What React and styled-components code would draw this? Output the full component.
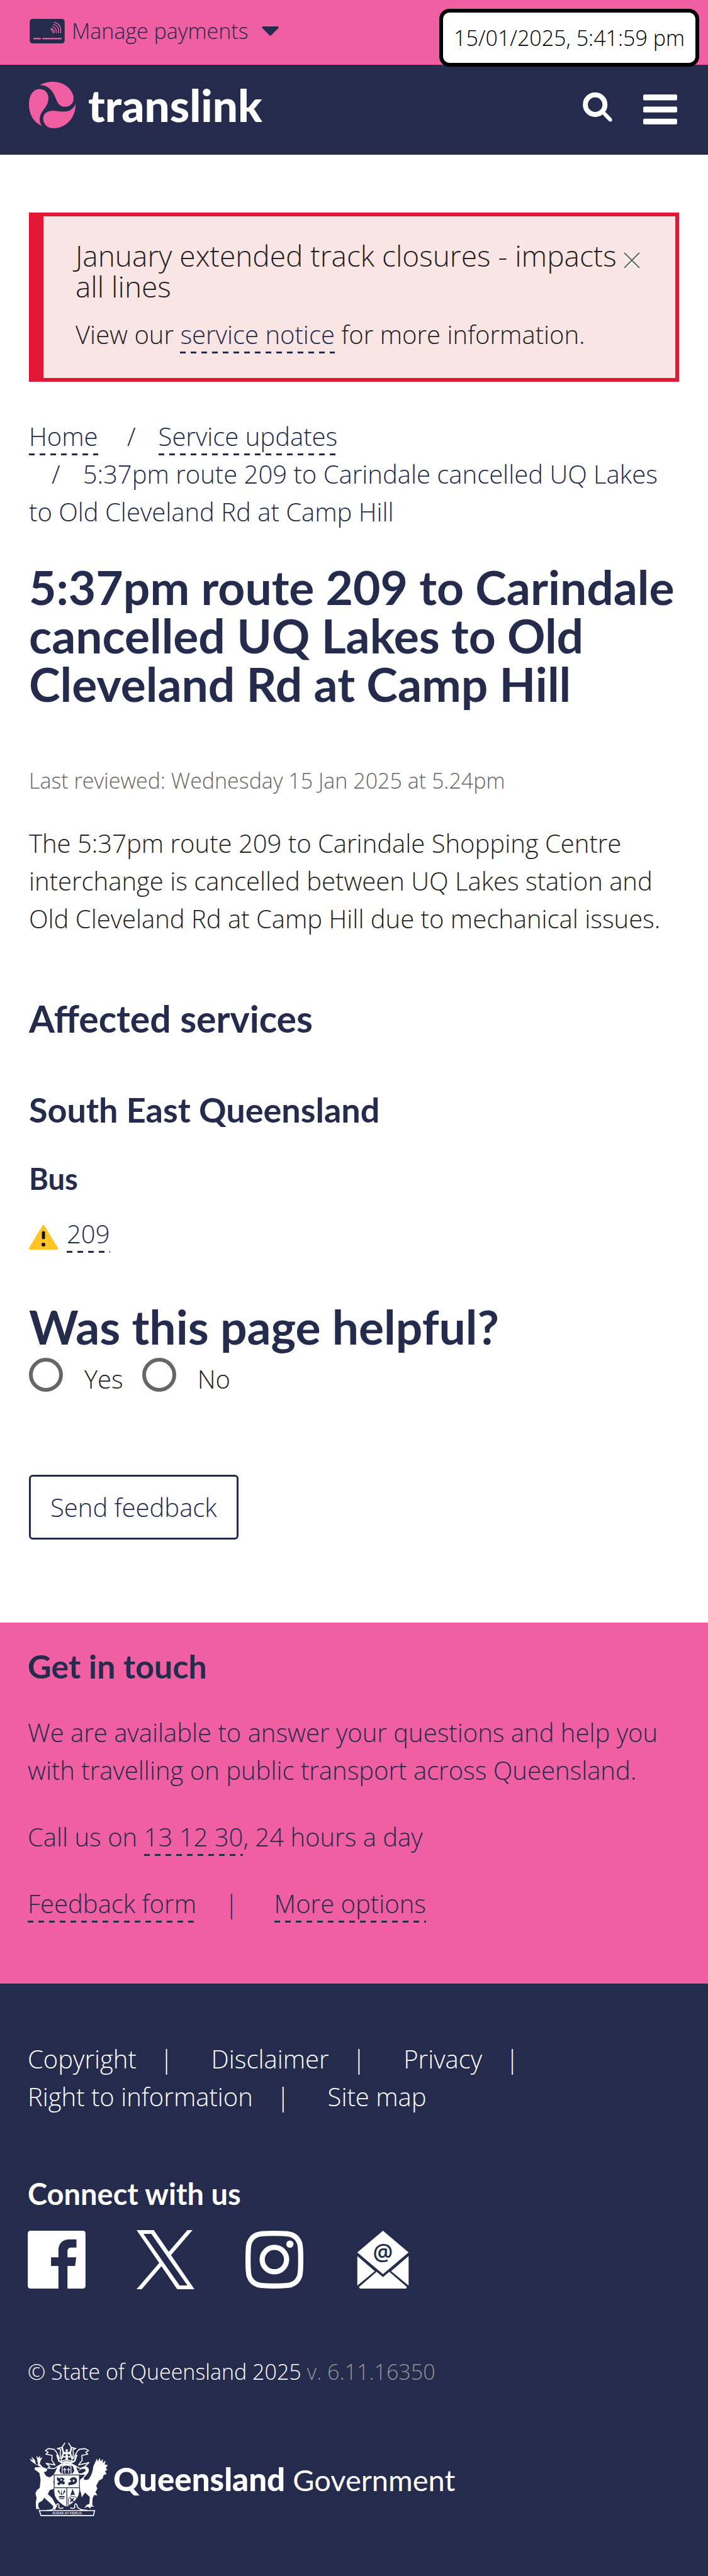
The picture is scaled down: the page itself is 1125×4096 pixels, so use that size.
import React from "react";
import styled, { createGlobalStyle } from "styled-components";

const navy = "#252b4d";
const pink = "#f05fa1";
const body = '"Open Sans", "Noto Sans", sans-serif';
const heading = 'Lato, "Open Sans", sans-serif';

const GlobalStyle = createGlobalStyle`
  *, *::before, *::after { box-sizing: border-box; }
  body {
    margin: 0;
    background: #fff;
    color: #222;
    font: 300 40px/60px ${body};
  }
  h1, h2, h3, h4, p, ul, ol, fieldset { margin: 0; padding: 0; border: 0; }
  ul, ol { list-style: none; }
  button { font: inherit; color: inherit; background: none; border: 0; padding: 0; cursor: pointer; }
  svg { display: block; flex: none; }
`;

const Page = styled.div`
  position: relative;
`;

const TopBar = styled.div`
  height: 103px;
  padding: 25px 47px 0;
  background: ${pink};
  color: ${navy};
`;

const PaymentsButton = styled.button`
  display: flex;
  align-items: center;
  gap: 11px;
  font-size: 34px;
  line-height: 48px;
`;

const PaymentsLabel = styled.span`
  padding-right: 11px;
`;

const Timestamp = styled.div`
  position: absolute;
  top: 14px;
  right: 14px;
  padding: 14px 17px;
  border: 6px solid #000;
  border-radius: 16px;
  background: #fff;
  color: #000;
  font-size: 34px;
  line-height: 52px;
`;

const Header = styled.header`
  display: flex;
  justify-content: space-between;
  align-items: center;
  padding: 27px 49px 42px 46px;
  background: ${navy};
  color: #fff;
`;

const Brand = styled.a`
  display: flex;
  align-items: center;
  gap: 20px;
  color: inherit;
  text-decoration: none;
  font: 900 71px/74px ${heading};
`;

const Actions = styled.div`
  display: flex;
  align-items: center;
  gap: 42px;
  padding-top: 14px;
`;

const Main = styled.main`
  padding: 92px 46px 132px;
`;

const Alert = styled.section`
  padding: 38px 56px 39px 51px;
  border: 6px solid #e31837;
  border-left-width: 23px;
  background: #f9e5e4;
`;

const AlertHead = styled.div`
  display: flex;
  align-items: flex-start;
  gap: 6px;
  margin-bottom: 22px;
`;

const AlertTitle = styled.p`
  flex: 1;
  font-size: 46px;
  line-height: 49px;
`;

const CloseButton = styled.button`
  margin-top: 19px;
`;

const Link = styled.a`
  padding-bottom: 3px;
  color: ${navy};
  text-decoration: none;
  background: linear-gradient(to right, ${navy} 9px, transparent 9px) 0 100% / 17px 3px repeat-x;
`;

const Breadcrumbs = styled.ol`
  margin-top: 57px;
  color: ${navy};
`;

const Crumb = styled.li`
  display: inline-block;
  vertical-align: top;

  & + &::before {
    content: "/";
    padding: 0 36px;
  }
`;

const Title = styled.h1`
  margin-top: ${(p) => p.$space};
  color: ${navy};
  font: 700 75px/77px ${heading};
`;

const Reviewed = styled.p`
  margin-top: 90px;
  color: #666;
  font-size: 34px;
  line-height: 50px;
`;

const Summary = styled.p`
  margin-top: 45px;
`;

const Subheading = styled.h2`
  margin-top: ${(p) => p.$space};
  color: ${(p) => p.$color || navy};
  font: 700 ${(p) => p.$size}/60px ${heading};
`;

const ServiceRow = styled.div`
  display: flex;
  align-items: center;
  gap: 14px;
  margin-top: 28px;

  svg { margin-top: 10px; }
`;

const Choices = styled.fieldset`
  display: flex;
  gap: 30px;
  margin-top: 11px;
`;

const Choice = styled.label`
  display: flex;
  align-items: flex-start;
  gap: 34px;
`;

const ChoiceText = styled.span`
  padding-top: 4px;
`;

const Radio = styled.input`
  appearance: none;
  width: 54px;
  height: 54px;
  margin: 0;
  border: 6px solid #666;
  border-radius: 50%;

  &:checked { background: ${navy}; background-clip: content-box; padding: 8px; }
`;

const SendButton = styled.button`
  && {
    display: block;
    height: 103px;
    margin-top: 122px;
    padding: 0 31px;
    border: 3px solid ${navy};
    border-radius: 6px;
    color: ${navy};
  }
`;

const Contact = styled.section`
  padding: 39px 44px 97px;
  background: ${pink};
  color: ${navy};
`;

const ContactText = styled.p`
  margin-top: 46px;
`;

const ContactLinks = styled.div`
  display: flex;
  margin-top: 46px;
`;

const Divider = styled.span`
  padding: 0 57px 0 45px;
`;

const Footer = styled.footer`
  padding: 90px 44px 95px;
  background: ${navy};
  color: #fff;
`;

const FooterLinks = styled.ul`
  display: flex;
  flex-wrap: wrap;
`;

const FooterItem = styled.li`
  a { color: inherit; text-decoration: none; }

  &:not(:last-child)::after {
    content: "|";
    padding: 0 60px 0 37px;
  }
`;

const Social = styled.div`
  display: flex;
  align-items: center;
  gap: 81px;
  margin-top: 28px;
`;

const Copyright = styled.p`
  margin-top: 106px;
  font-size: 34px;
  line-height: 50px;
`;

const Version = styled.span`
  color: #949494;
`;

const Government = styled.a`
  display: flex;
  align-items: center;
  gap: 9px;
  margin-top: 87px;
  padding-left: 3px;
  color: inherit;
  text-decoration: none;
  font: 400 47px/117px ${heading};
`;

const GovernmentName = styled.span`
  strong { font-size: 51px; font-weight: 900; }
`;

const CardIcon = () => (
  <svg width="56" height="39" viewBox="28 27 175 123" aria-hidden="true">
    <rect x="28" y="27" width="175" height="123" rx="14" fill={navy} />
    <g stroke={pink} fill="none" strokeLinecap="round">
      <path d="M49 126H81M93 126H185" strokeWidth="7" />
      <path d="M151 45C174 48 187 68 183 97M146 55C164 58 175 73 172 97M141 66C154 67 163 78 161 97M135 76C145 77 152 85 150 97M134 80C140 82 144 88 144 96" strokeWidth="4.5" />
    </g>
  </svg>
);

const CaretIcon = () => (
  <svg width="27" height="15" viewBox="0 0 27 15" aria-hidden="true">
    <path d="M2 0H25Q28 1 26 3L15 14Q13.500 15.500 12 14L1 3Q-1 1 2 0Z" fill={navy} />
  </svg>
);

const Emblem = () => (
  <svg width="74" height="74" viewBox="24 350 232 232" fill={pink} aria-hidden="true">
    <path d="M78 367C98 354 122 350 145 350C192 351 232 378 244 416C254 452 232 475 202 475C179 472 168 461 158 433C144 400 126 366 78 367Z" />
    <path d="M76 386C46 388 26 413 24 458C23 510 46 552 88 570C72 545 74 518 96 490C112 470 122 453 121 427C118 401 100 386 76 386Z" />
    <path d="M256 461C258 530 208 581 146 582C113 582 94 559 95 530C98 505 118 494 147 494C198 501 236 506 256 461Z" />
  </svg>
);

const SearchIcon = () => (
  <svg width="54" height="54" viewBox="120 42 170 170" stroke="#fff" fill="none" aria-hidden="true">
    <circle cx="182" cy="103" r="49" strokeWidth="25" />
    <path d="M228 148L259 180" strokeWidth="19" strokeLinejoin="round" />
    <path d="M226 146L259 180" strokeWidth="16" strokeLinecap="round" />
  </svg>
);

const MenuIcon = () => (
  <svg width="54" height="48" viewBox="420 54 171 150" fill="#fff" aria-hidden="true">
    <rect x="420" y="54" width="171" height="29" rx="6" />
    <rect x="420" y="115" width="171" height="29" rx="6" />
    <rect x="420" y="176" width="171" height="28" rx="6" />
  </svg>
);

const CloseIcon = () => (
  <svg width="26" height="30" viewBox="0 0 26 30" fill="none" strokeWidth="2" aria-hidden="true">
    <path d="M1 4L25 28M25 4L1 28" stroke="#fff" />
    <path d="M1 1L25 25M25 1L1 25" stroke="#666" />
  </svg>
);

const WarningIcon = () => (
  <svg width="46" height="39" viewBox="0 0 46 39" aria-hidden="true">
    <path d="M23 2L44 37H2Z" fill="#ffc425" stroke="#ffc425" strokeWidth="4" strokeLinejoin="round" />
    <path d="M23 12V20" stroke="#111" strokeWidth="5" strokeLinecap="round" />
    <circle cx="23" cy="31" r="3" fill="#111" />
  </svg>
);

const FacebookIcon = () => (
  <svg width="92" height="92" viewBox="15 54 288 289" fill="#fff" aria-hidden="true">
    <path fillRule="evenodd" d="M29 54H289Q303 54 303 68V329Q303 343 289 343H213V230H251L257 187H213V156Q213 138 234 138H258V97H222C190 97 168 117 168 150V187H131V230H168V343H29Q15 343 15 329V68Q15 54 29 54Z" />
  </svg>
);

const XIcon = () => (
  <svg width="92" height="94" viewBox="0 0 1200 1227" fill="#fff" aria-hidden="true">
    <path d="M714.163 519.284L1160.89 0H1055.03L667.137 450.887L357.328 0H0L468.492 681.821L0 1226.370H105.866L515.491 750.218L842.672 1226.370H1200L714.137 519.284H714.163ZM569.165 687.828L521.697 619.934L144.011 79.694H306.615L611.412 515.685L658.880 583.579L1055.080 1150.300H892.476L569.165 687.854V687.828Z" />
  </svg>
);

const InstagramIcon = () => (
  <svg width="92" height="92" viewBox="1108 54 289 289" fill="none" stroke="#fff" strokeWidth="26" aria-hidden="true">
    <path d="M1252.500 67C1206 67 1187 67 1170 73C1145 81 1134 96 1127 115C1121 133 1121 152 1121 198.500C1121 245 1121 264 1127 282C1134 301 1145 316 1170 324C1187 330 1206 330 1252.500 330C1299 330 1318 330 1335 324C1360 316 1371 301 1378 282C1384 264 1384 245 1384 198.500C1384 152 1384 133 1378 115C1371 96 1360 81 1335 73C1318 67 1299 67 1252.500 67Z" />
    <circle cx="1252.500" cy="198" r="61" />
    <circle cx="1330" cy="121" r="18" fill="#fff" stroke="none" />
  </svg>
);

const MailIcon = () => (
  <svg width="92" height="92" viewBox="-5 0 96 96" fill="#fff" aria-hidden="true">
    <path d="M42.500 0L85 36L42.500 72L0 36Z" />
    <path d="M0 42L29 67L0 91ZM85 42L56 67L85 91ZM32 68L42.500 77L53 68L82 93Q82 96 79 96H6Q3 96 3 93Z" />
    <text x="42.500" y="49" fill={navy} fontFamily="Open Sans, sans-serif" fontWeight="600" fontSize="37" textAnchor="middle">@</text>
  </svg>
);

const CoatOfArms = () => (
  <svg width="124" height="117" viewBox="27 33 390 367" fill="#fff" aria-hidden="true">
    {/* crest and mantling */}
    <g fill="none" stroke="#fff" strokeWidth="5" strokeLinecap="round" strokeLinejoin="round">
      <path d="M203 35L189 56L166 62L182 66L180 90L186 122M222 35L236 56L258 62L244 66L246 90L238 122" />
      <path d="M190 58L196 84L188 110M236 58L230 84L238 110" strokeWidth="8" />
      <path d="M178 112L160 78L150 66L120 62L106 72L120 80L108 90L140 96L138 120L154 144L110 136L128 152L118 160L150 162L186 140" />
      <path d="M246 112L264 78L274 66L304 62L322 72L308 80L318 90L288 96L290 120L272 144L324 132L304 150L312 160L276 160L240 140" />
      <path d="M164 96L174 124L186 130M262 96L252 124L240 130" strokeWidth="8" />
      <path d="M186 126Q212 112 238 126L234 142Q212 132 190 142Z" />
      <path d="M180 148C168 160 166 176 152 190H274C260 176 258 160 246 148Q212 134 180 148Z" strokeWidth="7" />
    </g>
    <path d="M190 130Q212 118 236 130L233 139Q212 129 193 139Z" />
    <path d="M206 66H219L216 80L230 77V92L216 88L220 102L230 98V108L218 106L219 118H206L207 106L195 108V98L205 102L209 88L195 92V77L209 80Z" />
    <path d="M190 152Q212 138 234 152V190H190Z" fill={navy} stroke="#fff" strokeWidth="4" />
    <path d="M203 158V184M195 167H211M222 158V184M214 167H230" stroke="#fff" strokeWidth="4" fill="none" />
    <path d="M168 150L182 150L176 174L186 190H150ZM258 150L244 150L250 174L240 190H274Z" />
    {/* red deer */}
    <path d="M84 154L58 142L34 124L28 110L44 122L36 102L54 120L58 138L70 146L64 112L60 98L70 108L80 98L78 112L92 106L82 122L78 138L92 154L116 164L112 176L98 180L110 200L128 206L148 192L158 200L146 228L154 262L128 270L118 290L140 310L160 346L156 368L142 362L146 350L114 320L100 308L92 322L72 334L70 352L78 364H60L58 334L62 308L56 286L64 270L78 258L82 218L76 184L52 166L54 156Z" />
    {/* brolga */}
    <path d="M264 190L292 184L308 174L302 162L288 164L268 176L288 156Q306 146 320 158Q328 170 318 186L302 204Q292 216 306 220L322 216Q342 190 346 150L364 112L368 128L378 108L382 126L394 114L392 134L408 122L402 142L418 144L408 160L416 168L404 176L412 188L396 196L392 212L374 222L360 248L366 262L356 280L366 296L350 294L342 310L340 344L350 354L334 352L330 362L318 352L300 360L312 344L326 338L328 304L304 282L288 306L284 284L270 252L274 230Q278 214 292 208L304 192L280 194Z" />
    {/* shield */}
    <path d="M150 194H276V254Q280 272 274 294Q260 332 212 356Q166 334 152 300Q146 272 150 254Z" stroke={navy} strokeWidth="4" />
    <path d="M152 258H274M213 258V354" stroke={navy} strokeWidth="4" />
    <g fill={navy}>
      <path d="M164 204L174 210L190 206L202 214L194 224L204 230L200 242L182 238L174 246L164 238L174 228L164 220ZM220 234L236 226L226 216L240 206Q260 202 264 218Q266 236 246 242L222 246ZM172 268L184 296L168 276ZM186 264L190 294H184ZM200 268L192 296L206 276ZM174 300H202V306H174ZM176 310H200V314H176ZM242 264L254 294Q240 290 230 298Z" />
    </g>
    <path d="M182 214Q188 212 190 220L182 224ZM246 216Q256 220 248 230Q238 224 246 216Z" />
    <path d="M220 312Q238 292 264 308Q254 330 222 346Z" stroke={navy} strokeWidth="3" />
    <path d="M230 310L248 328M248 310L230 328" stroke={navy} strokeWidth="6" fill="none" />
    {/* scroll */}
    <path d="M76 372H352L346 397H84ZM112 371Q160 370 162 344Q170 330 174 346Q168 368 196 358M316 371Q264 370 264 344Q256 330 252 346Q258 368 230 358" fill="none" stroke="#fff" strokeWidth="5" />
    <text x="214" y="391" fontFamily="Open Sans, sans-serif" fontWeight="600" fontSize="17" textAnchor="middle">AUDAX AT FIDELIS</text>
  </svg>
);

const footerLinks = ["Copyright", "Disclaimer", "Privacy", "Right to information", "Site map"];

export default function App() {
  return (
    <Page>
      <GlobalStyle />
      <TopBar>
        <PaymentsButton type="button">
          <CardIcon />
          <PaymentsLabel>Manage payments</PaymentsLabel>
          <CaretIcon />
        </PaymentsButton>
      </TopBar>
      <Header>
        <Brand href="#">
          <Emblem />
          <span>translink</span>
        </Brand>
        <Actions>
          <button type="button" aria-label="Search"><SearchIcon /></button>
          <button type="button" aria-label="Menu"><MenuIcon /></button>
        </Actions>
      </Header>
      <Main>
        <Alert>
          <AlertHead>
            <AlertTitle>January extended track closures - impacts all lines</AlertTitle>
            <CloseButton type="button" aria-label="Close"><CloseIcon /></CloseButton>
          </AlertHead>
          <p>View our <Link href="#">service notice</Link> for more information.</p>
        </Alert>
        <Breadcrumbs>
          <Crumb><Link href="#">Home</Link></Crumb>{" "}
          <Crumb><Link href="#">Service updates</Link></Crumb>{" "}
          <Crumb>5:37pm route 209 to Carindale cancelled UQ Lakes to Old Cleveland Rd at Camp Hill</Crumb>
        </Breadcrumbs>
        <Title $space="51px">5:37pm route 209 to Carindale cancelled UQ Lakes to Old Cleveland Rd at Camp Hill</Title>
        <Reviewed>Last reviewed: Wednesday 15 Jan 2025 at 5.24pm</Reviewed>
        <Summary>
          The 5:37pm route 209 to Carindale Shopping Centre interchange is cancelled between UQ Lakes
          station and Old Cleveland Rd at Camp Hill due to mechanical issues.
        </Summary>
        <Subheading $space="99px" $size="59px">Affected services</Subheading>
        <Subheading as="h3" $space="85px" $size="54px">South East Queensland</Subheading>
        <Subheading as="h4" $space="49px" $size="47px">Bus</Subheading>
        <ServiceRow>
          <WarningIcon />
          <span><Link href="#">209</Link></span>
        </ServiceRow>
        <form onSubmit={(e) => e.preventDefault()}>
          <Title as="h2" $space="79px" id="helpful">Was this page helpful?</Title>
          <Choices aria-labelledby="helpful">
            <Choice htmlFor="yes">
              <Radio type="radio" name="helpful" id="yes" />
              <ChoiceText>Yes</ChoiceText>
            </Choice>
            <Choice htmlFor="no">
              <Radio type="radio" name="helpful" id="no" />
              <ChoiceText>No</ChoiceText>
            </Choice>
          </Choices>
          <SendButton type="submit">Send feedback</SendButton>
        </form>
      </Main>
      <Contact>
        <Subheading $space="0" $size="52px">Get in touch</Subheading>
        <ContactText>
          We are available to answer your questions and help you with travelling on public transport
          across Queensland.
        </ContactText>
        <ContactText>Call us on <Link href="#">13 12 30</Link>, 24 hours a day</ContactText>
        <ContactLinks>
          <span><Link href="#">Feedback form</Link></span>
          <Divider>|</Divider>
          <span><Link href="#">More options</Link></span>
        </ContactLinks>
      </Contact>
      <Footer>
        <FooterLinks>
          {footerLinks.map((label) => (
            <FooterItem key={label}><a href="#">{label}</a></FooterItem>
          ))}
        </FooterLinks>
        <Subheading as="h3" $space="94px" $size="47px" $color="#fff">Connect with us</Subheading>
        <Social>
          <a href="#" aria-label="Facebook"><FacebookIcon /></a>
          <a href="#" aria-label="X"><XIcon /></a>
          <a href="#" aria-label="Instagram"><InstagramIcon /></a>
          <a href="#" aria-label="Email"><MailIcon /></a>
        </Social>
        <Copyright>© State of Queensland 2025 <Version>v. 6.11.16350</Version></Copyright>
        <Government href="#">
          <CoatOfArms />
          <GovernmentName><strong>Queensland</strong> Government</GovernmentName>
        </Government>
      </Footer>
      <Timestamp>15/01/2025, 5:41:59 pm</Timestamp>
    </Page>
  );
}
